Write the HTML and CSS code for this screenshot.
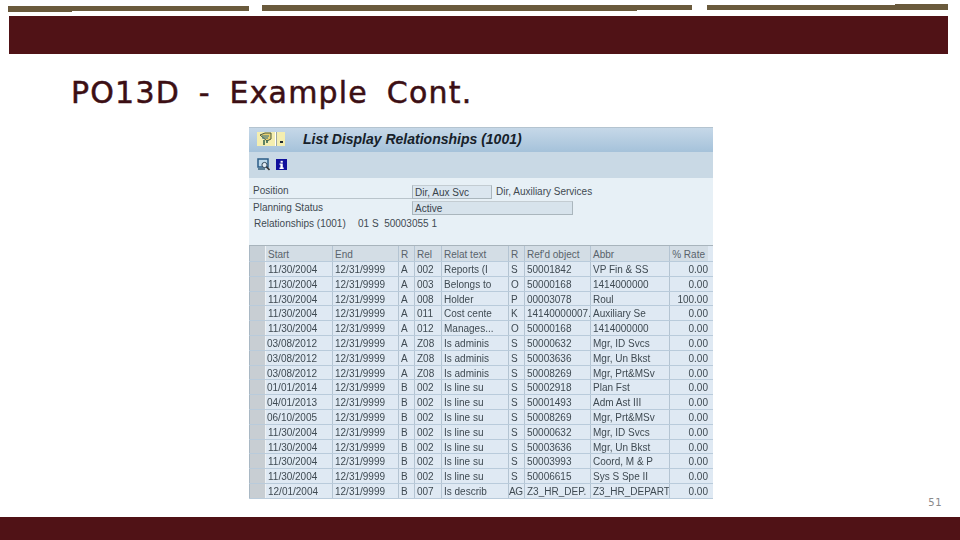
FILE: index.html
```html
<!DOCTYPE html>
<html lang="en">
<head>
<meta charset="utf-8">
<title>PO13D - Example Cont.</title>
<link rel="stylesheet" href="styles.css">
</head>
<body>
<div class="slide">
  <div class="rules">
    <div class="rule rule-a"><i class="tab tab-a"></i></div>
    <div class="rule rule-b"><i class="tab tab-b"></i></div>
    <div class="rule rule-c"><i class="tab tab-c"></i></div>
  </div>
  <div class="band"></div>
  <h1 class="title">PO13D - Example Cont.</h1>
  <div class="sap">
    <div class="sap-title">
      <div class="sap-menu">
        <svg width="28" height="14" viewBox="0 0 28 14"><rect width="28" height="14" fill="#f4eeb0"/><path d="M3 3l5-2h6v6l-4 2z" fill="#e8d070" stroke="#4a5a40"/><path d="M5 4h7M5 6h6" stroke="#2f6f86"/><path d="M7 8v5M10 8v3" stroke="#3a6a50" stroke-width="1.6"/><path d="M18.5 0v14" stroke="#fff"/><path d="M19.5 0v14" stroke="#9aa6a0"/><rect x="23" y="9" width="3" height="2" fill="#1f2a30"/></svg>
      </div>
      <div class="sap-heading">List Display Relationships (1001)</div>
    </div>
    <div class="sap-tools">
      <svg width="13" height="13" viewBox="0 0 13 13"><rect x="1" y="1" width="10" height="8" fill="#bcd8ea" stroke="#2b5c86" stroke-width="1.5"/><path d="M1 11h7" stroke="#5b7f95" stroke-width="2"/><circle cx="7.5" cy="7" r="2.6" fill="#dfeaf2" stroke="#33495a"/><path d="M9.5 9l3 3" stroke="#333" stroke-width="1.6"/></svg>
      <svg width="11" height="11" viewBox="0 0 12 12"><rect width="12" height="12" fill="#10109c"/><rect x="5" y="2" width="2.4" height="2" fill="#fff"/><path d="M3.8 5h3.6v4.4h1V11H3.8V9.4h1V6.4h-1z" fill="#fff"/></svg>
    </div>
    <div class="sap-form">
      <div class="form-row row-position">
        <span class="form-label">Position</span>
        <span class="field field-short">Dir, Aux Svc</span>
        <span class="form-desc">Dir, Auxiliary Services</span>
      </div>
      <div class="form-row row-status">
        <span class="form-label">Planning Status</span>
        <span class="field field-long">Active</span>
      </div>
      <div class="form-row row-rel">
        <span class="rel-label">Relationships (1001)</span>
        <span>01 S&nbsp; 50003055 1</span>
      </div>
    </div>
    <div class="grid">
      <div class="gr gh"><b></b><span>Start</span><span>End</span><span>R</span><span>Rel</span><span>Relat text</span><span>R</span><span>Ref'd object</span><span>Abbr</span><span class="num">% Rate</span></div>
      <div class="gr"><b></b><span>11/30/2004</span><span>12/31/9999</span><span>A</span><span>002</span><span>Reports (I</span><span>S</span><span>50001842</span><span>VP Fin &amp; SS</span><span class="num">0.00</span></div>
      <div class="gr"><b></b><span>11/30/2004</span><span>12/31/9999</span><span>A</span><span>003</span><span>Belongs to</span><span>O</span><span>50000168</span><span>1414000000</span><span class="num">0.00</span></div>
      <div class="gr"><b></b><span>11/30/2004</span><span>12/31/9999</span><span>A</span><span>008</span><span>Holder</span><span>P</span><span>00003078</span><span>Roul</span><span class="num">100.00</span></div>
      <div class="gr"><b></b><span>11/30/2004</span><span>12/31/9999</span><span>A</span><span>011</span><span>Cost cente</span><span>K</span><span>14140000007.</span><span>Auxiliary Se</span><span class="num">0.00</span></div>
      <div class="gr"><b></b><span>11/30/2004</span><span>12/31/9999</span><span>A</span><span>012</span><span>Manages...</span><span>O</span><span>50000168</span><span>1414000000</span><span class="num">0.00</span></div>
      <div class="gr"><b></b><span class="tight">03/08/2012</span><span>12/31/9999</span><span>A</span><span>Z08</span><span>Is adminis</span><span>S</span><span>50000632</span><span>Mgr, ID Svcs</span><span class="num">0.00</span></div>
      <div class="gr"><b></b><span class="tight">03/08/2012</span><span>12/31/9999</span><span>A</span><span>Z08</span><span>Is adminis</span><span>S</span><span>50003636</span><span>Mgr, Un Bkst</span><span class="num">0.00</span></div>
      <div class="gr"><b></b><span class="tight">03/08/2012</span><span>12/31/9999</span><span>A</span><span>Z08</span><span>Is adminis</span><span>S</span><span>50008269</span><span>Mgr, Prt&amp;MSv</span><span class="num">0.00</span></div>
      <div class="gr"><b></b><span class="tight">01/01/2014</span><span>12/31/9999</span><span>B</span><span>002</span><span>Is line su</span><span>S</span><span>50002918</span><span>Plan Fst</span><span class="num">0.00</span></div>
      <div class="gr"><b></b><span class="tight">04/01/2013</span><span>12/31/9999</span><span>B</span><span>002</span><span>Is line su</span><span>S</span><span>50001493</span><span>Adm Ast III</span><span class="num">0.00</span></div>
      <div class="gr"><b></b><span class="tight">06/10/2005</span><span>12/31/9999</span><span>B</span><span>002</span><span>Is line su</span><span>S</span><span>50008269</span><span>Mgr, Prt&amp;MSv</span><span class="num">0.00</span></div>
      <div class="gr"><b></b><span>11/30/2004</span><span>12/31/9999</span><span>B</span><span>002</span><span>Is line su</span><span>S</span><span>50000632</span><span>Mgr, ID Svcs</span><span class="num">0.00</span></div>
      <div class="gr"><b></b><span>11/30/2004</span><span>12/31/9999</span><span>B</span><span>002</span><span>Is line su</span><span>S</span><span>50003636</span><span>Mgr, Un Bkst</span><span class="num">0.00</span></div>
      <div class="gr"><b></b><span>11/30/2004</span><span>12/31/9999</span><span>B</span><span>002</span><span>Is line su</span><span>S</span><span>50003993</span><span>Coord, M &amp; P</span><span class="num">0.00</span></div>
      <div class="gr"><b></b><span>11/30/2004</span><span>12/31/9999</span><span>B</span><span>002</span><span>Is line su</span><span>S</span><span>50006615</span><span>Sys S Spe II</span><span class="num">0.00</span></div>
      <div class="gr"><b></b><span>12/01/2004</span><span>12/31/9999</span><span>B</span><span>007</span><span>Is describ</span><span class="ag">AG</span><span>Z3_HR_DEP.</span><span>Z3_HR_DEPART</span><span class="num">0.00</span></div>
    </div>
  </div>
  <div class="page-wrap"><span class="page">51</span></div>
  <div class="footer"></div>
</div>
</body>
</html>
```
FILE: styles.css
```css
* { box-sizing: border-box; }
html, body { margin: 0; padding: 0; background: #fff; }
.slide {
  width: 960px;
  height: 540px;
  overflow: hidden;
  display: flex;
  flex-direction: column;
  background: #fff;
  font-family: "Liberation Sans", Arial, sans-serif;
}
.rules {
  display: flex;
  height: 16px;
  padding: 5px 12px 0 8px;
  gap: 13px;
}
.rule { height: 5px; background: #6a5a3c; position: relative; }
.rule-a { width: 241px; margin-top: 1px; }
.rule-b { width: 430px; }
.rule-c { width: 241px; margin-left: 2px; }
.tab { position: absolute; display: block; background: #6a5a3c; }
.tab-a { left: 0; top: 4px; width: 64px; height: 2px; }
.tab-b { left: 0; top: 5px; width: 375px; height: 1px; }
.tab-c { right: 0; top: -1px; width: 53px; height: 2px; }
.band { height: 38px; margin: 0 12px 0 9px; background: #501216; flex: none; }
.title {
  margin: 17px 0 0 71px;
  height: 56px;
  font-family: "DejaVu Sans", sans-serif;
  font-size: 30px;
  line-height: 44px;
  font-weight: 400;
  letter-spacing: 1.2px;
  word-spacing: 8px;
  -webkit-text-stroke: 0.5px #3c0f14;
  color: #3c0f14;
  white-space: nowrap;
  flex: none;
}
.sap {
  margin-left: 249px;
  width: 464px;
  height: 372px;
  flex: none;
  display: flex;
  flex-direction: column;
  background: #dfe9f3;
  color: #3f4a52;
  font-size: 10px;
}
.sap-title {
  height: 25px;
  flex: none;
  display: flex;
  align-items: center;
  background: linear-gradient(#c6d8e8, #a5c2da);
  border-top: 1px solid #b4c4d0;
  padding-bottom: 2px;
}
.sap-menu { margin-left: 8px; width: 46px; display: flex; }
.sap-heading { font-size: 14px; font-weight: 700; font-style: italic; color: #16212a; }
.sap-tools {
  height: 26px;
  flex: none;
  display: flex;
  align-items: center;
  gap: 6px;
  padding: 0 0 2px 8px;
  background: #c9d9e5;
}
.sap-form { height: 67px; flex: none; padding-top: 6px; background: #e7f0f6; }
.form-row { display: flex; align-items: center; height: 15px; white-space: nowrap; }
.form-label { width: 163px; flex: none; padding-left: 4px; }
.row-position .form-label { height: 15px; line-height: 14px; border-bottom: 1px solid #b9c4cb; }
.field { height: 14px; line-height: 13px; padding-left: 2px; color: #37424a; border: 1px solid #aab6bd; border-top-color: #c3ccd2; flex: none; }
.field-short { width: 80px; background: #dbe6ef; }
.form-desc { margin-left: 4px; }
.field-long { width: 161px; background: #d7e3ec; }
.row-status { height: 16px; padding-top: 1px; }
.row-rel { padding-left: 5px; margin-top: 1px; }
.rel-label { width: 104px; }
.grid { flex: 1; display: flex; flex-direction: column; border-top: 1px solid #a8b4bc; filter: blur(0.25px); }
.gr {
  display: grid;
  grid-template-columns: 17px 66px 66px 16px 27px 67px 16px 66px 79px 40px;
  height: 14.8px;
  line-height: 15px;
  border-bottom: 1px solid #b9cbdb;
  white-space: nowrap;
}
.gr > b { background: #c8ced3; border-right: 1px solid #eef2f5; border-left: 1px solid #a9b8c4; }
.gr > span { padding-left: 2px; border-left: 1px solid #b4c4d2; overflow: hidden; }
.gr > b + span { border-left: 0; }
.gh { height: 16px; line-height: 17px; background: linear-gradient(90deg, #d3dde5 99%, #dfe9f3 99%); color: #59636b; }
.gh > b { background: #c7d0d7; }
.gr > .num { text-align: right; padding: 0 1px 0 0; border-left: 1px solid #b4c4d2; }
.gh > .num { padding-right: 4px; }
.gr > .tight { padding-left: 1px; }
.gr > .ag { padding-left: 0; letter-spacing: -0.5px; }
.page-wrap { height: 18px; flex: none; display: flex; justify-content: flex-end; padding-right: 18px; }
.page { font-size: 10px; line-height: 8px; color: #8a8a8a; letter-spacing: 0.5px; font-family: "DejaVu Sans", sans-serif; }
.footer { height: 23px; flex: none; background: #501216; }
```
